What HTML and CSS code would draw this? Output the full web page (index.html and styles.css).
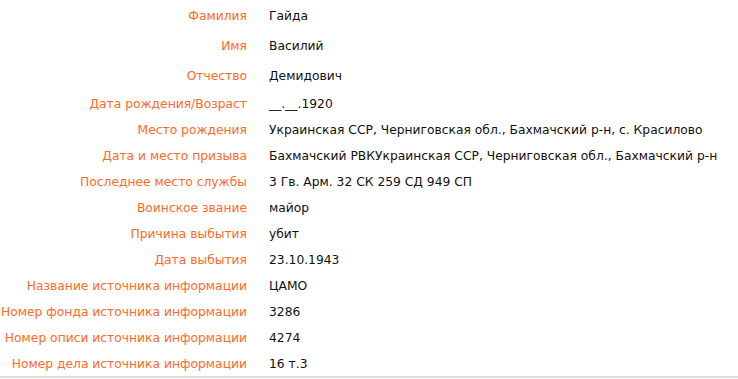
FILE: index.html
```html
<!DOCTYPE html>
<html lang="ru">
<head>
<meta charset="utf-8">
<link rel="stylesheet" href="styles.css">
</head>
<body>
<div class="card">
  <div class="row tall"><div class="label">Фамилия</div><div class="value">Гайда</div></div>
  <div class="row tall"><div class="label">Имя</div><div class="value">Василий</div></div>
  <div class="row tall"><div class="label">Отчество</div><div class="value">Демидович</div></div>
  <div class="row"><div class="label">Дата рождения/Возраст</div><div class="value">__.__.1920</div></div>
  <div class="row"><div class="label">Место рождения</div><div class="value">Украинская ССР, Черниговская обл., Бахмачский р-н, с. Красилово</div></div>
  <div class="row"><div class="label">Дата и место призыва</div><div class="value">Бахмачский РВКУкраинская ССР, Черниговская обл., Бахмачский р-н</div></div>
  <div class="row"><div class="label">Последнее место службы</div><div class="value">3 Гв. Арм. 32 СК 259 СД 949 СП</div></div>
  <div class="row"><div class="label">Воинское звание</div><div class="value">майор</div></div>
  <div class="row"><div class="label">Причина выбытия</div><div class="value">убит</div></div>
  <div class="row"><div class="label">Дата выбытия</div><div class="value">23.10.1943</div></div>
  <div class="row"><div class="label">Название источника информации</div><div class="value">ЦАМО</div></div>
  <div class="row"><div class="label">Номер фонда источника информации</div><div class="value">3286</div></div>
  <div class="row"><div class="label">Номер описи источника информации</div><div class="value">4274</div></div>
  <div class="row"><div class="label">Номер дела источника информации</div><div class="value">16 т.3</div></div>
</div>
</body>
</html>
```
FILE: styles.css
```css
html, body {
  margin: 0;
  padding: 0;
  background: #fff;
}
body {
  font-family: "DejaVu Sans", Verdana, sans-serif;
  font-size: 12.3px;
  color: #111;
}
.card {
  width: 738px;
  height: 378px;
  border-bottom: 2px solid #dddddd;
  box-sizing: border-box;
  padding-top: 1px;
}
.row {
  display: flex;
  align-items: center;
  height: 26px;
  gap: 22px;
}
.row.tall {
  height: 30px;
}
.label {
  width: 247px;
  flex: none;
  text-align: right;
  color: #ff6a2a;
  white-space: nowrap;
}
.value {
  white-space: nowrap;
}
```
